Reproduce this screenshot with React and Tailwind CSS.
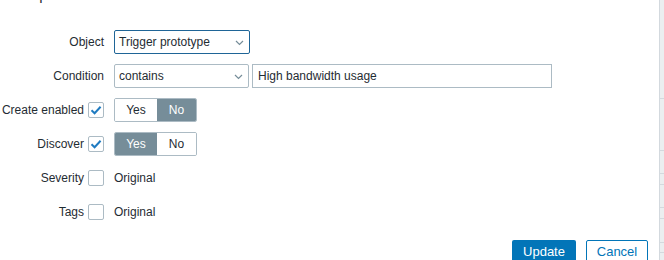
import React from 'react'

const Check = ({ checked }) => (
    <span className="flex h-[16px] w-[16px] items-center justify-center rounded-[2px] border border-[#acbbc4] bg-white">
        {checked && (
            <svg width="12" height="10" viewBox="0 0 12 10">
                <path d="M1.5 5.2 L4.6 8.2 L10.6 1.8" fill="none" stroke="#1f7bc1" strokeWidth="2" />
            </svg>
        )}
    </span>
)

const Chevron = () => (
    <svg width="9" height="6" viewBox="0 0 9 6" className="absolute right-[5px] top-[9px]">
        <path d="M1 1 L4.5 4.5 L8 1" fill="none" stroke="#768d99" strokeWidth="1.2" />
    </svg>
)

const Row = ({ label, checkbox, checked, children }) => (
    <div className="flex h-[24px] items-center">
        <div className="flex w-[104px] items-center justify-end gap-[4px] whitespace-nowrap">
            <span>{label}</span>
            {checkbox && <Check checked={checked} />}
        </div>
        <div className="ml-[10px] flex items-center">{children}</div>
    </div>
)

const Toggle = ({ value }) => (
    <div className="flex h-[24px] overflow-hidden rounded-[2px] border border-[#acbbc4]">
        <span className={`flex w-[42px] items-center justify-center ${value === 'Yes' ? 'bg-[#768d99] text-white' : 'bg-white'}`}>Yes</span>
        <span className={`flex w-[39px] items-center justify-center ${value === 'No' ? 'bg-[#768d99] text-white' : 'bg-white'}`}>No</span>
    </div>
)

const sideLines = [98, 150, 173, 184, 207, 218, 242, 252]

export default function App() {
    return (
        <div className="flex h-[260px] w-[664px] overflow-hidden bg-white font-['Liberation_Sans',Arial,sans-serif] text-[12px] text-[#1f2c33]">
            <div className="w-[659px]">
                <div className="-mt-[13px] ml-[-9px] h-[16px] text-[15px] leading-[16px] text-[#1f2c33]">Mass update</div>
                <div className="mt-[27px] flex flex-col gap-[10px]">
                    <Row label="Object">
                        <div className="relative flex h-[24px] w-[136px] items-center rounded-[2px] border border-[#1f6597] pl-[4px]">
                            Trigger prototype
                            <Chevron />
                        </div>
                    </Row>
                    <Row label="Condition">
                        <div className="relative flex h-[24px] w-[135px] items-center rounded-[2px] border border-[#acbbc4] pl-[4px]">
                            contains
                            <Chevron />
                        </div>
                        <div className="ml-[3px] flex h-[24px] w-[300px] items-center border border-[#acbbc4] pl-[5px]">
                            High bandwidth usage
                        </div>
                    </Row>
                    <Row label="Create enabled" checkbox checked>
                        <Toggle value="No" />
                    </Row>
                    <Row label="Discover" checkbox checked>
                        <Toggle value="Yes" />
                    </Row>
                    <Row label="Severity" checkbox>
                        <span>Original</span>
                    </Row>
                    <Row label="Tags" checkbox>
                        <span>Original</span>
                    </Row>
                </div>
                <div className="mt-[16px] flex justify-end gap-[10px] pr-[11px]">
                    <button className="flex h-[24px] w-[64px] items-center justify-center rounded-[2px] bg-[#0275b8] text-[13px] text-white">Update</button>
                    <button className="flex h-[24px] w-[62px] items-center justify-center rounded-[2px] border border-[#0275b8] bg-white text-[13px] text-[#0275b8]">Cancel</button>
                </div>
            </div>
            <div className="relative flex-1 border-l border-[#d3d9de] bg-[#ebeef0]">
                {sideLines.map((y) => (
                    <div key={y} className="absolute left-0 right-0 h-px bg-[#d3d9de]" style={{ top: y }} />
                ))}
            </div>
        </div>
    )
}
